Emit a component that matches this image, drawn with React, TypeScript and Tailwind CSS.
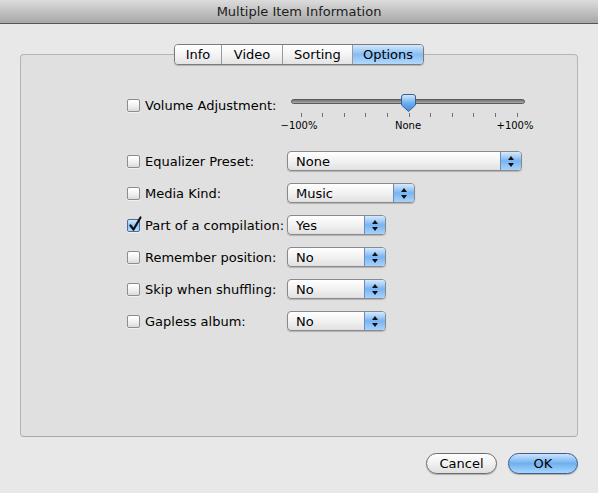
import React from "react";

function CheckBox({ checked = false }: { checked?: boolean }) {
  return (
    <span
      className={
        "relative block w-[13px] h-[13px] shrink-0 rounded-[2px] border shadow-[0_1px_0_rgba(255,255,255,0.6)] " +
        (checked
          ? "border-[#4b6c9c] bg-gradient-to-b from-[#d4e9fc] via-[#8fc3f5] to-[#b7dbfb]"
          : "border-[#8d8d8d] bg-gradient-to-b from-white via-[#f3f3f3] to-[#dcdcdc]")
      }
    >
      {checked && (
        <svg
          className="absolute left-[1px] top-[-4px]"
          width="14"
          height="16"
          viewBox="0 0 14 16"
        >
          <path
            d="M1.5 9.5 L4.5 13.5 L11.5 1.5"
            fill="none"
            stroke="#111"
            strokeWidth="2.2"
            strokeLinecap="round"
            strokeLinejoin="round"
          />
        </svg>
      )}
    </span>
  );
}

function Stepper() {
  return (
    <div className="w-[21px] h-full shrink-0 flex flex-col items-center justify-center gap-[3px] border-l border-[#6f8ab8] bg-gradient-to-b from-[#d6eafc] via-[#78b4f2] to-[#a9d3fa]">
      <svg width="6" height="4" viewBox="0 0 6 4">
        <path d="M3 0 L6 4 L0 4 Z" fill="#111" />
      </svg>
      <svg width="6" height="4" viewBox="0 0 6 4">
        <path d="M0 0 L6 0 L3 4 Z" fill="#111" />
      </svg>
    </div>
  );
}

function Popup({ value, widthClass }: { value: string; widthClass: string }) {
  return (
    <div
      className={
        "flex h-[20px] rounded-[4px] border border-[#8a8a8a] overflow-hidden shadow-[0_1px_1px_rgba(0,0,0,0.2)] bg-gradient-to-b from-white via-[#f2f2f2] to-[#e0e0e0] " +
        widthClass
      }
    >
      <div className="flex-1 flex items-center pl-[8px] text-[13px] leading-none text-black">
        {value}
      </div>
      <Stepper />
    </div>
  );
}

function RowLabel({ text, checked = false }: { text: string; checked?: boolean }) {
  return (
    <div className="w-[160px] h-[20px] shrink-0 flex items-center gap-[5px]">
      <CheckBox checked={checked} />
      <span className="text-[13px] leading-none text-black whitespace-nowrap">{text}</span>
    </div>
  );
}

function VolumeSlider() {
  const ticks = Array.from({ length: 11 }, (_, i) => 13.5 + i * 21.6);
  return (
    <div className="relative w-[245px] h-[38px]">
      <svg className="absolute left-0 top-0" width="245" height="26" viewBox="0 0 245 26">
        <defs>
          <linearGradient id="trackFill" x1="0" y1="0" x2="0" y2="1">
            <stop offset="0" stopColor="#6b6b6b" />
            <stop offset="1" stopColor="#b2b2b2" />
          </linearGradient>
          <linearGradient id="thumbFill" x1="0" y1="0" x2="0" y2="1">
            <stop offset="0" stopColor="#d9ecfd" />
            <stop offset="0.5" stopColor="#6eaef0" />
            <stop offset="1" stopColor="#3f8ae3" />
          </linearGradient>
        </defs>
        <rect x="4.5" y="5.5" width="233" height="4" rx="2" fill="url(#trackFill)" stroke="#5c5c5c" />
        {ticks.map((x) => (
          <line key={x} x1={Math.round(x) + 0.5} y1="19" x2={Math.round(x) + 0.5} y2="23" stroke="#707070" />
        ))}
        <path
          d="M114.5 3 Q114.5 0.5 117 0.5 H126 Q128.5 0.5 128.5 3 V11 L121.5 17.5 L114.5 11 Z"
          fill="url(#thumbFill)"
          stroke="#3c5c8e"
        />
      </svg>
      <span className="absolute left-[12px] top-[26px] -translate-x-1/2 text-[10px] leading-[12px] text-black whitespace-nowrap">
        −100%
      </span>
      <span className="absolute left-[121px] top-[26px] -translate-x-1/2 text-[10px] leading-[12px] text-black whitespace-nowrap">
        None
      </span>
      <span className="absolute left-[228px] top-[26px] -translate-x-1/2 text-[10px] leading-[12px] text-black whitespace-nowrap">
        +100%
      </span>
    </div>
  );
}

function Tabs() {
  const tabs = [
    { name: "Info", w: "w-[46px]" },
    { name: "Video", w: "w-[61px]" },
    { name: "Sorting", w: "w-[70px]" },
    { name: "Options", w: "w-[71px]" },
  ];
  return (
    <div className="relative z-10 flex justify-center">
      <div className="flex h-[21px] rounded-[4px] border border-[#7a7a7a] overflow-hidden shadow-[0_1px_1px_rgba(0,0,0,0.2)]">
        {tabs.map((t, i) => {
          const active = t.name === "Options";
          return (
            <div
              key={t.name}
              className={
                "flex items-center justify-center text-[13px] leading-none text-black " +
                t.w +
                (i > 0 ? " border-l border-[#9a9a9a]" : "") +
                (active
                  ? " border-[#5a77a8] bg-gradient-to-b from-[#d3e8fc] via-[#86bdf4] to-[#b3d9fb]"
                  : " bg-gradient-to-b from-white via-[#f4f4f4] to-[#e3e3e3]")
              }
            >
              {t.name}
            </div>
          );
        })}
      </div>
    </div>
  );
}

export default function App() {
  return (
    <div className="w-[598px] h-[493px] overflow-hidden bg-[#e8e8e8] font-['DejaVu_Sans','Lucida_Grande',sans-serif]">
      <div className="h-[24px] border-b border-[#545454] bg-gradient-to-b from-[#dcdcdc] to-[#a7a7a7] flex items-center justify-center text-[13px] leading-none text-[#1c1c1c]">
        Multiple Item Information
      </div>

      <div className="px-[20px] pt-[20px]">
        <Tabs />
        <div className="-mt-[11px] h-[383px] rounded-[4px] border border-[#b4b4b4] border-b-[#a9a9a9] bg-[#e0e0e0] pt-[39px] pl-[106px]">
          <div className="flex items-start">
            <div className="mt-[1px]">
              <RowLabel text="Volume Adjustment:" />
            </div>
            <VolumeSlider />
          </div>

          <div className="mt-[19px] flex flex-col gap-[12px]">
            <div className="flex items-center">
              <RowLabel text="Equalizer Preset:" />
              <Popup value="None" widthClass="w-[235px]" />
            </div>
            <div className="flex items-center">
              <RowLabel text="Media Kind:" />
              <Popup value="Music" widthClass="w-[128px]" />
            </div>
            <div className="flex items-center">
              <RowLabel text="Part of a compilation:" checked />
              <Popup value="Yes" widthClass="w-[99px]" />
            </div>
            <div className="flex items-center">
              <RowLabel text="Remember position:" />
              <Popup value="No" widthClass="w-[99px]" />
            </div>
            <div className="flex items-center">
              <RowLabel text="Skip when shuffling:" />
              <Popup value="No" widthClass="w-[99px]" />
            </div>
            <div className="flex items-center">
              <RowLabel text="Gapless album:" />
              <Popup value="No" widthClass="w-[99px]" />
            </div>
          </div>
        </div>

        <div className="mt-[16px] flex justify-end gap-[11px]">
          <button className="w-[71px] h-[21px] rounded-full border border-[#6c6c6c] bg-gradient-to-b from-white via-[#f1f1f1] to-[#dedede] shadow-[0_1px_1px_rgba(0,0,0,0.25)] text-[13px] leading-none text-black">
            Cancel
          </button>
          <button className="w-[70px] h-[21px] rounded-full border border-[#3d5a92] bg-gradient-to-b from-[#cbe4fb] via-[#6fb0f1] to-[#a8d6fb] shadow-[0_1px_1px_rgba(0,0,0,0.25)] text-[13px] leading-none text-black">
            OK
          </button>
        </div>
      </div>
    </div>
  );
}
